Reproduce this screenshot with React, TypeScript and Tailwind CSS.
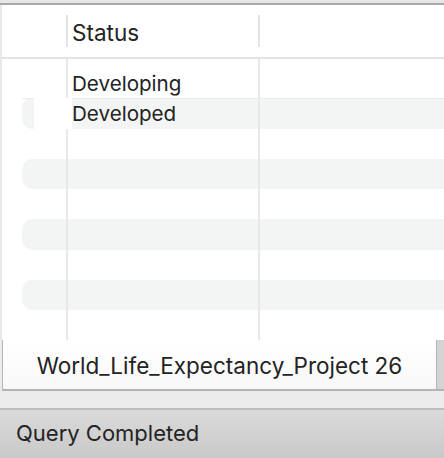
import React from "react";

const rows = ["Developing", "Developed", "", "", "", "", "", "", ""];

function Row({ text, index }: { text: string; index: number }) {
    const striped = index % 2 === 1;
    const selected = index === 1;
    return (
        <div className="relative flex h-[30.25px] shrink-0">
            <div className="w-[64px] h-full">
                {striped && <div className="ml-[20px] h-full rounded-l-[10px] bg-[#f3f4f4]" />}
            </div>
            <div className="w-[2px] h-full bg-[#e8e8e8]" />
            <div className={`w-[190px] h-full flex items-center pl-[4px] pt-[2px] ${striped ? "bg-[#f3f4f4]" : ""}`}>
                <span className="text-[20.6px] leading-none text-[#232323]">{text}</span>
            </div>
            <div className="w-[2px] h-full bg-[#e8e8e8]" />
            <div className={`flex-1 h-full ${striped ? "bg-[#f3f4f4]" : ""}`} />
            {selected && (
                <>
                    <div className="absolute left-[20px] right-0 top-0 h-px bg-[#ebebeb]" />
                    <div className="absolute left-[32px] top-0 w-[38px] h-full bg-white" />
                </>
            )}
        </div>
    );
}

export default function App() {
    return (
        <div className="w-[444px] h-[458px] flex flex-col overflow-hidden bg-white font-['Inter',sans-serif]">
            <div className="h-[3px] shrink-0 bg-[#e6e6e6]" />
            <div className="h-[2px] shrink-0 bg-[#a9a9a9]" />

            <div className="h-[335px] shrink-0 flex flex-col border-l-2 border-[#e9e9e9] overflow-hidden">
                {/* header */}
                <div className="h-[54px] shrink-0 flex items-center border-b-2 border-[#e4e4e4]">
                    <div className="w-[64px]" />
                    <div className="w-[2px] h-[32px] bg-[#e4e4e4]" />
                    <div className="w-[190px] pl-[4px] pt-[5px] text-[22.5px] leading-none text-[#232323]">Status</div>
                    <div className="w-[2px] h-[32px] bg-[#e4e4e4]" />
                </div>
                {/* body */}
                <div className="flex h-[9px] shrink-0">
                    <div className="w-[64px]" />
                    <div className="w-[2px] bg-[#e8e8e8]" />
                    <div className="w-[190px]" />
                    <div className="w-[2px] bg-[#e8e8e8]" />
                </div>
                {rows.map((r, i) => (
                    <Row key={i} text={r} index={i} />
                ))}
            </div>

            {/* tabs */}
            <div className="h-[51px] shrink-0 flex bg-[#ececec] pl-[2px]">
                <div className="w-[435px] h-full flex items-center justify-center pt-[3px] border-l border-r border-b-2 border-[#b4b4b4] bg-gradient-to-b from-white to-[#f8f8f8]">
                    <span className="text-[22.5px] leading-none text-[#232323]">World_Life_Expectancy_Project 26</span>
                </div>
                <div className="flex-1 h-full bg-[#d4d4d4] border-b-2 border-[#b4b4b4]" />
            </div>
            <div className="h-[17px] shrink-0 bg-[#ececec]" />
            <div className="h-[2px] shrink-0 bg-[#bebebe]" />

            {/* status bar */}
            <div className="flex-1 flex items-center pl-[16px] pb-[2px] bg-gradient-to-b from-[#dadada] to-[#c9c9c9]">
                <span className="text-[22px] leading-none text-[#232323]">Query Completed</span>
            </div>
        </div>
    );
}
